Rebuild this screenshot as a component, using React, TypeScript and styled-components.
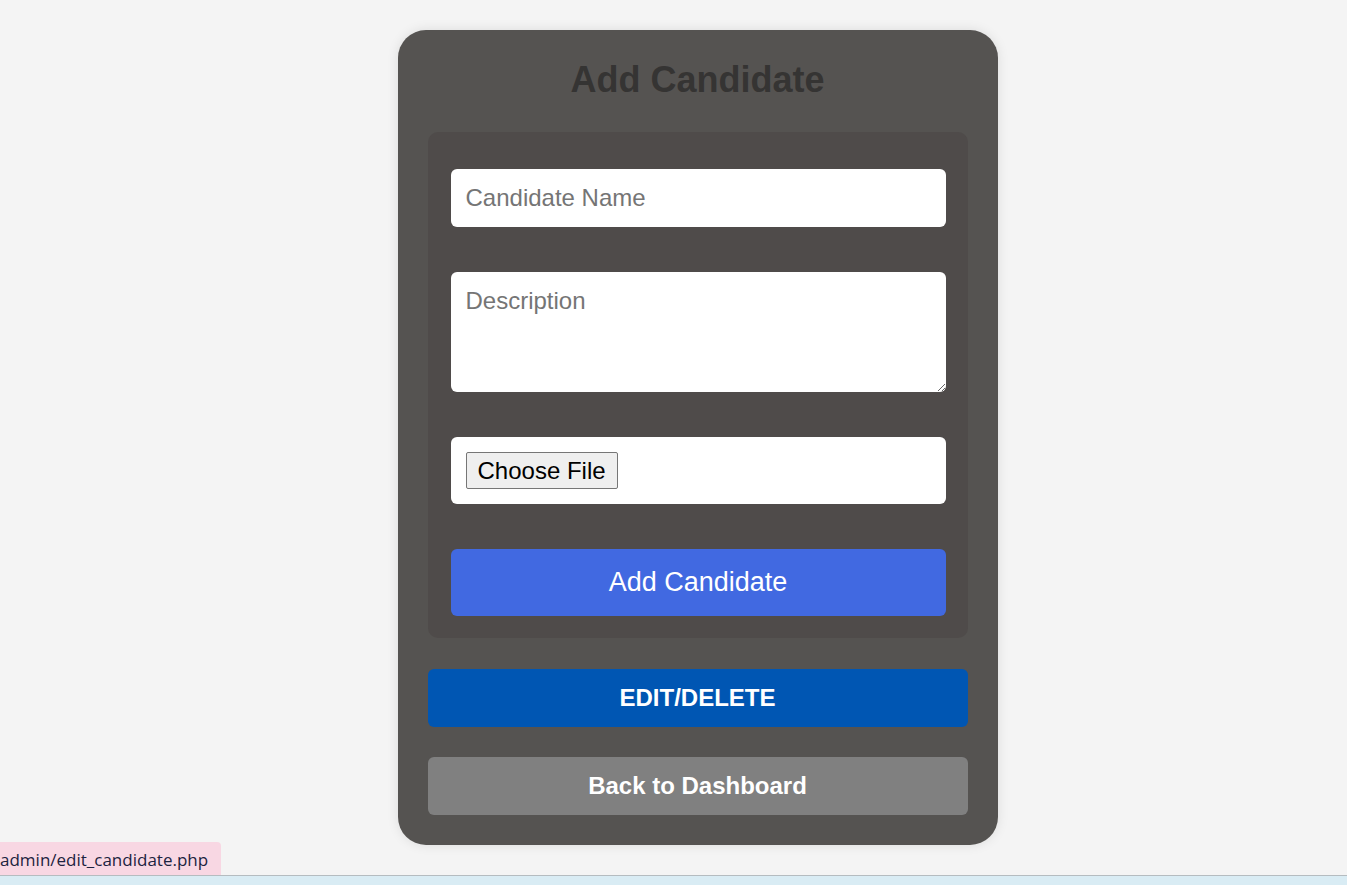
import React from 'react'
import styled, { createGlobalStyle } from 'styled-components'

const GlobalStyle = createGlobalStyle`
  html, body {
    margin: 0;
    padding: 0;
    background: #f4f4f4;
    font-family: 'Liberation Sans', Arial, sans-serif;
  }
`

const Page = styled.div`
  min-height: 885px;
  display: flex;
  justify-content: center;
  align-items: flex-start;
  padding: 30px 0 0 48px;
  box-sizing: border-box;
  position: relative;
`

const Card = styled.div`
  width: 600px;
  box-sizing: border-box;
  background: #555351;
  border-radius: 28px;
  padding: 22px 30px 30px;
  box-shadow: 0 0 12px rgba(0, 0, 0, 0.1);
`

const Title = styled.h2`
  margin: 0 0 24px;
  text-align: center;
  font-size: 36px;
  font-weight: bold;
  color: #353433;
  line-height: 56px;
`

const Form = styled.form`
  background: #4f4b4a;
  border-radius: 10px;
  padding: 37px 22px 22px 23px;
  display: flex;
  flex-direction: column;
  gap: 45px;
`

const TextInput = styled.input`
  height: 58px;
  box-sizing: border-box;
  border: none;
  border-radius: 6px;
  padding: 0 15px;
  font-family: inherit;
  font-size: 24px;
  color: #222;
  background: #fff;
  outline: none;
  &::placeholder {
    color: #757575;
  }
`

const TextArea = styled.textarea`
  height: 120px;
  box-sizing: border-box;
  border: none;
  border-radius: 6px;
  padding: 15px;
  font-family: inherit;
  font-size: 24px;
  background: #fff;
  resize: vertical;
  outline: none;
  &::placeholder {
    color: #757575;
  }
`

const FileBox = styled.label`
  height: 67px;
  box-sizing: border-box;
  background: #fff;
  border-radius: 6px;
  padding: 0 15px;
  display: flex;
  align-items: center;
`

const FileButton = styled.span`
  height: 37px;
  box-sizing: border-box;
  padding: 0 11px;
  display: inline-flex;
  align-items: center;
  border: 1px solid #767676;
  border-radius: 2px;
  background: #efefef;
  font-size: 24px;
  color: #000;
`

const HiddenFile = styled.input`
  display: none;
`

const SubmitButton = styled.button`
  height: 67px;
  border: none;
  border-radius: 6px;
  background: #4169e1;
  color: #fff;
  font-family: inherit;
  font-size: 27px;
  cursor: pointer;
`

const LinkButton = styled.a<{ $bg: string }>`
  display: flex;
  align-items: center;
  justify-content: center;
  height: 58px;
  margin-top: ${(p) => (p.$bg === '#808080' ? '30px' : '31px')};
  border-radius: 6px;
  background: ${(p) => p.$bg};
  color: #fff;
  font-size: 24px;
  font-weight: bold;
  text-decoration: none;
`

const StatusTip = styled.div`
  position: absolute;
  left: 0;
  bottom: 9px;
  height: 34px;
  padding: 0 13px 0 0;
  display: flex;
  align-items: center;
  background: #f8d7e3;
  border-top-right-radius: 4px;
  color: #1c2340;
  font-family: 'Open Sans', 'Noto Sans', sans-serif;
  font-size: 17px;
`

const BottomStrip = styled.div`
  position: absolute;
  left: 0;
  right: 0;
  bottom: 0;
  height: 9px;
  background: #d9ecf4;
  border-top: 1px solid #b5bcc0;
`

const App: React.FC = () => {
  return (
    <>
      <GlobalStyle />
      <Page>
        <Card>
          <Title>Add Candidate</Title>
          <Form onSubmit={(e) => e.preventDefault()}>
            <TextInput type="text" placeholder="Candidate Name" />
            <TextArea placeholder="Description" />
            <FileBox>
              <FileButton>Choose File</FileButton>
              <HiddenFile type="file" />
            </FileBox>
            <SubmitButton type="submit">Add Candidate</SubmitButton>
          </Form>
          <LinkButton href="#" $bg="#0056b3">
            EDIT/DELETE
          </LinkButton>
          <LinkButton href="#" $bg="#808080">
            Back to Dashboard
          </LinkButton>
        </Card>
        <StatusTip>admin/edit_candidate.php</StatusTip>
        <BottomStrip />
      </Page>
    </>
  )
}

export default App
